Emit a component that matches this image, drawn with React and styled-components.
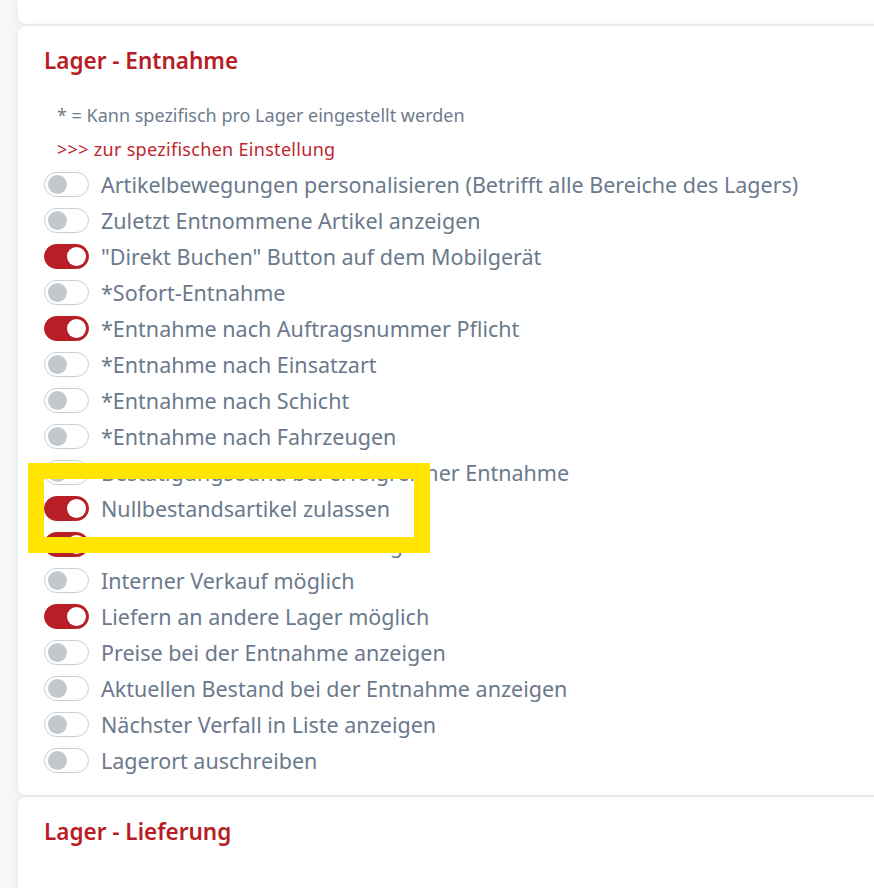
import React from "react";
import styled, { createGlobalStyle } from "styled-components";

const Global = createGlobalStyle`
  html, body { margin: 0; padding: 0; background: #f6f7f9; }
  body { font-family: "Noto Sans", "Open Sans", sans-serif; overflow: hidden; }
`;

const Page = styled.div`
  display: flex;
  flex-direction: column;
  gap: 2px;
  padding-left: 18px;
  width: 874px;
  height: 910px;
  box-sizing: border-box;
  overflow: hidden;
`;

const Card = styled.section`
  background: #ffffff;
  border-radius: ${(p) => (p.$cut ? "0 0 8px 8px" : "8px 0 0 8px")};
  box-shadow: 0 2px 10px rgba(30, 40, 60, 0.08);
  margin-right: -20px;
  padding: ${(p) => (p.$cut ? "0" : "22px 0 17px 26px")};
  height: ${(p) => (p.$cut ? "24px" : "auto")};
  flex: ${(p) => (p.$grow ? "1 0 auto" : "0 0 auto")};
`;

const Title = styled.h2`
  margin: 0;
  font-size: 22.5px;
  line-height: 26px;
  font-weight: 600;
  color: #b71d25;
`;

const Notes = styled.div`
  margin-top: 24px;
  padding-left: 13px;
  display: flex;
  flex-direction: column;
`;

const Note = styled.div`
  font-size: 18px;
  line-height: 34px;
  letter-spacing: ${(p) => (p.$link ? "0.3px" : "0")};
  color: ${(p) => (p.$link ? "#c0262d" : "#6e7b8d")};
`;

const List = styled.div`
  display: flex;
  flex-direction: column;
`;

const Row = styled.div`
  position: relative;
  display: flex;
  align-items: center;
  gap: 12px;
  height: 36px;
`;

const Track = styled.span`
  position: relative;
  box-sizing: border-box;
  width: 45px;
  height: 25px;
  border-radius: 13px;
  flex-shrink: 0;
  background: ${(p) => (p.$on ? "#b81e26" : "#ffffff")};
  border: 1px solid ${(p) => (p.$on ? "#b81e26" : "#c9ced6")};
`;

const Thumb = styled.span`
  position: absolute;
  top: 2px;
  left: ${(p) => (p.$on ? "22px" : "3px")};
  width: 19px;
  height: 19px;
  border-radius: 50%;
  background: ${(p) => (p.$on ? "#ffffff" : "#c3c8cf")};
`;

const Label = styled.span`
  font-size: 21.5px;
  color: #6b798c;
  white-space: nowrap;
`;

const Highlight = styled.div`
  position: absolute;
  z-index: 5;
  left: -16px;
  top: -27px;
  width: 402px;
  height: 90px;
  box-sizing: border-box;
  border: 16px solid #ffe500;
  pointer-events: none;
`;

const items = [
  ["Artikelbewegungen personalisieren (Betrifft alle Bereiche des Lagers)", false],
  ["Zuletzt Entnommene Artikel anzeigen", false],
  ['"Direkt Buchen" Button auf dem Mobilgerät', true],
  ["*Sofort-Entnahme", false],
  ["*Entnahme nach Auftragsnummer Pflicht", true],
  ["*Entnahme nach Einsatzart", false],
  ["*Entnahme nach Schicht", false],
  ["*Entnahme nach Fahrzeugen", false],
  ["Bestätigungsound bei erfolgreicher Entnahme", false],
  ["Nullbestandsartikel zulassen", true, true],
  ["Bereitsfehlende Artikel anzeigen", true],
  ["Interner Verkauf möglich", false],
  ["Liefern an andere Lager möglich", true],
  ["Preise bei der Entnahme anzeigen", false],
  ["Aktuellen Bestand bei der Entnahme anzeigen", false],
  ["Nächster Verfall in Liste anzeigen", false],
  ["Lagerort auschreiben", false],
];

function Toggle({ on }) {
  return (
    <Track $on={on}>
      <Thumb $on={on} />
    </Track>
  );
}

export default function App() {
  return (
    <>
      <Global />
      <Page>
        <Card $cut />
        <Card>
          <Title>Lager - Entnahme</Title>
          <Notes>
            <Note>* = Kann spezifisch pro Lager eingestellt werden</Note>
            <Note $link>&gt;&gt;&gt; zur spezifischen Einstellung</Note>
          </Notes>
          <List>
            {items.map(([label, on, mark]) => (
              <Row key={label}>
                <Toggle on={on} />
                <Label>{label}</Label>
                {mark && <Highlight />}
              </Row>
            ))}
          </List>
        </Card>
        <Card $grow>
          <Title>Lager - Lieferung</Title>
        </Card>
      </Page>
    </>
  );
}
